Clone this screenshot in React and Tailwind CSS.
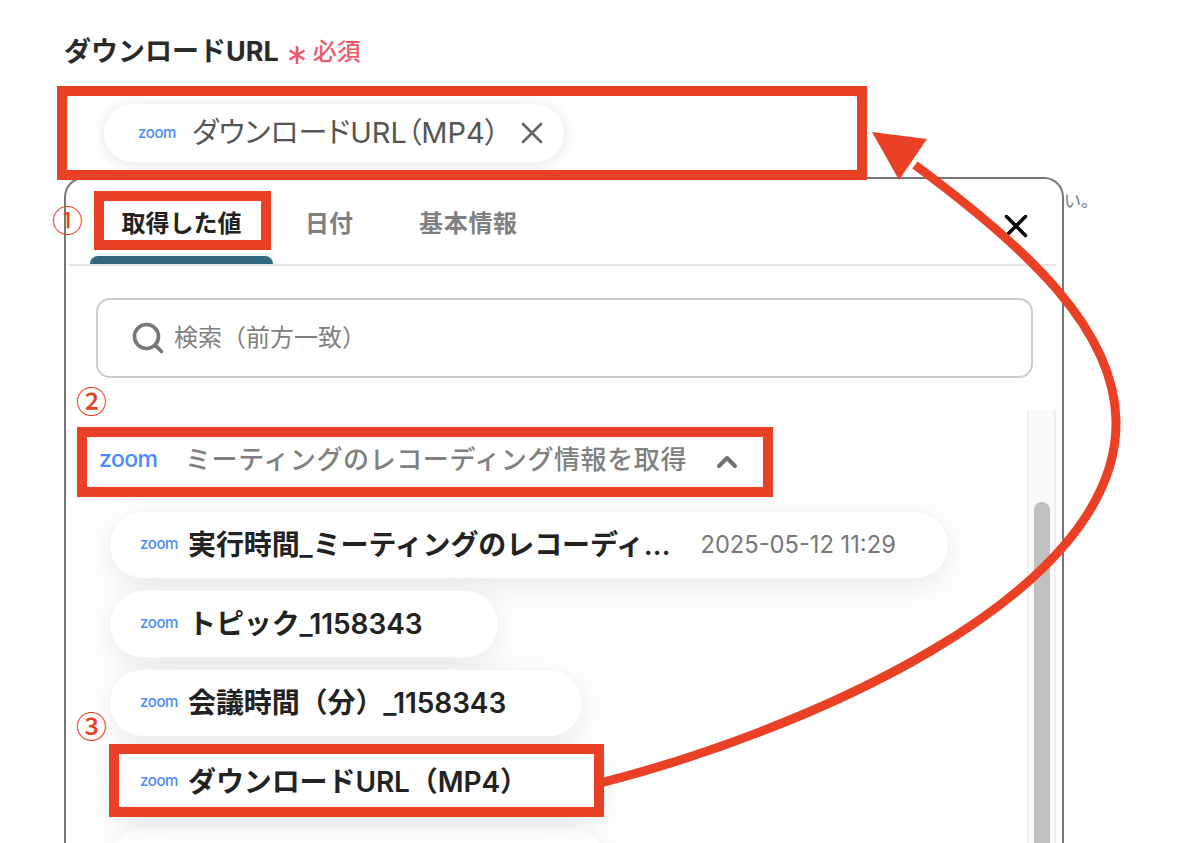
import { ChevronUp, Search, X } from "lucide-react";

const jp = "font-['Inter','Noto_Sans_CJK_JP','Noto_Sans',sans-serif]";
const circled = "absolute font-['Noto_Sans_CJK_JP',sans-serif] text-[31px] leading-[44px] text-[#ea4025]";

function ZoomMark({ className }) {
  return (
    <span className={`font-['Inter',sans-serif] font-medium text-[#4a8cff] leading-none ${className}`}>
      zoom
    </span>
  );
}

function ValuePill({ label, value, className = "" }) {
  return (
    <div className={`flex items-center h-[68px] w-fit rounded-[34px] bg-white border border-[#f4f4f4] shadow-[0_8px_32px_rgba(0,0,0,0.09)] ${className}`}>
      <ZoomMark className="ml-[30px] w-[48px] text-[15px] tracking-[-0.4px] -mt-[3px]" />
      {label && <span className="-mt-[1px] text-[28px] tracking-[-0.1px] leading-none font-semibold text-[#222] whitespace-nowrap">{label}</span>}
      {value && <span className="ml-[30px] mr-[52px] text-[23.7px] leading-none text-[#777] whitespace-nowrap">{value}</span>}
    </div>
  );
}

function Marker({ className }) {
  return <div className={`absolute border-[10px] border-[#ea4025] ${className}`} />;
}

export default function App() {
  return (
    <div className={`relative w-[1181px] h-[843px] overflow-hidden bg-white pt-[36px] pl-[64px] ${jp}`}>
      {/* label */}
      <div className="flex items-center h-[30px]">
        <span className="text-[27px] leading-none font-bold text-[#2a2a2a]">ダウンロードURL</span>
        <svg className="ml-[9px] mt-[8px]" width="18" height="20" viewBox="0 0 18 20" fill="none" stroke="#ee5a6b" strokeWidth="2.6">
          <path d="M9 1v18M1.5 5.5l15 9M16.5 5.5l-15 9" />
        </svg>
        <span className="ml-[7px] text-[24px] leading-none font-medium text-[#ee5a6b] mt-[1px]">必須</span>
      </div>

      {/* field */}
      <div className="mt-[26px] w-[796px] h-[85px] rounded-t-[14px] border border-[#d8d8d8] border-b-0 pl-[38px] pt-[10px]">
        <div className="flex items-center w-[462px] h-[60px] rounded-[30px] bg-white border border-[#f4f4f4] shadow-[0_2px_14px_rgba(0,0,0,0.1)]">
          <ZoomMark className="ml-[34px] w-[54px] text-[15px] tracking-[-0.4px] -mt-[2px]" />
          <span className="w-[324px] -mt-[2px] text-[29px] leading-none text-[#555] whitespace-nowrap [font-feature-settings:'palt']">ダウンロードURL（MP4）</span>
          <X className="-ml-[2px] text-[#666]" size={36} strokeWidth={1.8} />
        </div>
      </div>

      {/* value picker */}
      <div className="w-[1000px] h-[700px] rounded-t-[20px] border-2 border-b-0 border-[#777] bg-white">
        <div className="relative flex ml-[3px] mr-[6px] h-[87px] border-b-2 border-[#e5e5e5] pl-[21px] text-[24px] leading-none font-bold">
          <div className="relative w-[183px] text-center pt-[33px] text-[#222]">
            取得した値
            <div className="absolute left-0 right-0 bottom-0 h-[8px] rounded-t-[8px] bg-[#2f6880]" />
          </div>
          <div className="px-8 pt-[33px] text-[#808080]">日付</div>
          <div className="ml-[2px] px-8 pt-[33px] text-[#808080] tracking-[0.7px]">基本情報</div>
          <X className="absolute right-[21px] top-[28px] text-black" size={38} strokeWidth={2.2} />
        </div>

        <div className="flex items-center mt-[32px] ml-[30px] mr-[29px] h-[80px] rounded-[14px] border-2 border-[#cccccc] pl-[32px]">
          <Search className="text-[#777]" size={36} strokeWidth={2.4} />
          <span className="ml-[8px] text-[24px] leading-none text-[#808080]">検索（前方一致）</span>
        </div>

        <div className="flex mt-[32px] h-[500px]">
          <div className="flex-1 pl-[33px]">
            <div className="flex items-center mt-[27px] h-[50px]">
              <ZoomMark className="w-[86px] text-[23px] tracking-[-0.6px] -mt-[5px]" />
              <span className="-mt-[4px] text-[26px] tracking-[0.6px] leading-none font-medium text-[#808080] whitespace-nowrap">ミーティングのレコーディング情報を取得</span>
              <ChevronUp className="ml-[24px] text-[#707070]" size={32} strokeWidth={3} />
            </div>
            <div className="flex flex-col gap-[11px] mt-[24px] ml-[10px]">
              <ValuePill label="実行時間_ミーティングのレコーディ…" value="2025-05-12 11:29" />
              <ValuePill label="トピック_1158343" className="pr-[76px]" />
              <ValuePill label="会議時間（分）_1158343" className="pr-[76px]" />
              <ValuePill label="ダウンロードURL（MP4）" className="pr-[76px]" />
              <div className="w-[497px] h-[68px] rounded-[34px] border border-[#f4f4f4] shadow-[0_8px_32px_rgba(0,0,0,0.09)]" />
            </div>
          </div>
          <div className="w-[29px] mr-[6px] pl-[7px] pt-[92px] bg-[#fafafa] border-x-2 border-[#eeeeee]">
            <div className="w-[16px] h-[420px] -ml-[2px] rounded-full bg-[#c1c1c1]" />
          </div>
        </div>
      </div>

      <span className="absolute left-[1064px] top-[189px] text-[17px] text-[#6b7a86]">い。</span>

      {/* annotations */}
      <Marker className="left-[57px] top-[86px] w-[810px] h-[94px]" />
      <Marker className="left-[94px] top-[191px] w-[177px] h-[59px]" />
      <Marker className="left-[77px] top-[427px] w-[696px] h-[70px]" />
      <Marker className="left-[109px] top-[744px] w-[495px] h-[73px]" />

      <span className={`${circled} left-[52px] top-[197px]`}>①</span>
      <span className={`${circled} left-[76px] top-[378px] font-medium`}>②</span>
      <span className={`${circled} left-[76px] top-[703px] font-medium`}>③</span>

      <svg className="absolute left-0 top-0 pointer-events-none" width="1181" height="843" viewBox="0 0 1181 843" fill="none">
        <path d="M600 783C790 735 1120 600 1116 420C1114 330 1030 250 915 165" stroke="#ea4025" strokeWidth="9" />
        <path d="M872 132L927 139L899 180Z" fill="#ea4025" />
      </svg>
    </div>
  );
}
